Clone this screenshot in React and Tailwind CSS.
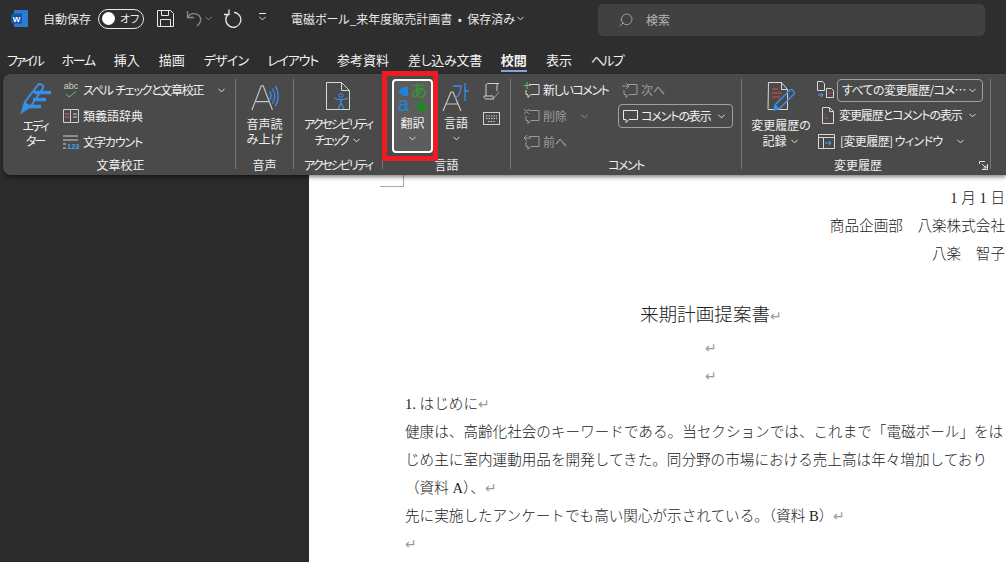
import React from 'react';
import { ChevronDown, Search } from 'lucide-react';

const tabs = [
  { t: 'ファイル', c: 'tracking-[-2.400px]' },
  { t: 'ホーム', c: 'tracking-[-1.300px]' },
  { t: '挿入', c: '' },
  { t: '描画', c: '' },
  { t: 'デザイン', c: 'tracking-[-0.800px]' },
  { t: 'レイアウト', c: 'tracking-[-1.200px]' },
  { t: '参考資料', c: '' },
  { t: '差し込み文書', c: 'tracking-[-0.300px]' },
  { t: '校閲', c: 'font-bold' },
  { t: '表示', c: '' },
  { t: 'ヘルプ', c: 'tracking-[-1.700px]' },
];

const Chev = ({ className = '' }) => <ChevronDown size={11} strokeWidth={2} className={`shrink-0 ${className}`} />;

const Ret = () => <span className="inline-block w-[12px] text-center text-[#9a9a9a] text-[14px] leading-[14px]">↵</span>;

// Comment bubble, with a small mark in the top left corner
const Bubble = ({ mark, color = '#dcdcdc' }) => (
  <svg width="17" height="17" viewBox="0 0 17 17" fill="none" stroke={color} strokeWidth="1" className="shrink-0">
    <path d="M6 2.500h10v10H8l-3 3v-3H3V8" />
    {mark === 'plus' && <path d="M4 0v7M.5 3.500h7" stroke="#5fc46a" />}
    {mark === 'x' && <path d="M1 1l5 5M6 1L1 6" />}
    {mark === 'prev' && <path d="M8 4H1M4 1L1 4l3 3" />}
    {mark === 'next' && <path d="M1 4h7M5 1l3 3-3 3" />}
  </svg>
);

const Group = ({ label, width, labelClass = '', children }) => (
  <div className={`flex flex-col shrink-0 border-r border-[#777777] my-[5px] h-[90px] ${width}`}>
    <div className="flex-1 flex min-h-0">{children}</div>
    <div className={`text-[12px] leading-[16px] -mb-[4px] text-center text-[#f0f0f0] whitespace-nowrap ${labelClass}`}>{label}</div>
  </div>
);

const SmallRow = ({ icon, children, dim, className = '' }) => (
  <div className={`h-[26px] flex items-center gap-[3px] whitespace-nowrap text-[12px] ${dim ? 'text-[#9b9b9b]' : 'text-[#f0f0f0]'} ${className}`}>
    {icon}
    {children}
  </div>
);

const Line = ({ className = '', children }) => <div className={`h-[28px] ${className}`}>{children}</div>;

export default function App() {
  return (
    <div className="w-[1006px] h-[562px] overflow-hidden bg-[#2e2e2e] font-['Noto_Sans_CJK_JP','Liberation_Sans',sans-serif] [font-feature-settings:'palt'] flex flex-col relative">
      {/* Title bar */}
      <div className="h-[37px] shrink-0 flex items-center text-[#e8e8e8] text-[12px] pl-[11px]">
        <svg width="17" height="17" viewBox="0 0 17 17" className="shrink-0">
          <rect x="3" y="0" width="14" height="17" rx="1" fill="#2b7cd3" />
          <rect x="0" y="3.500" width="11" height="10" rx="1" fill="#1651a8" />
          <text x="5.500" y="11.500" fontSize="8" fontWeight="700" fill="#fff" textAnchor="middle" fontFamily="Liberation Sans">W</text>
        </svg>
        <span className="ml-[15px] w-[55px] whitespace-nowrap">自動保存</span>
        <div className="w-[46px] h-[20px] rounded-full border border-[#e8e8e8] flex items-center pl-[3px] gap-[5px]">
          <span className="w-[13px] h-[13px] rounded-full bg-white" />
          <span className="text-[11px] whitespace-nowrap">オフ</span>
        </div>
        <svg width="17" height="17" viewBox="0 0 17 17" fill="none" stroke="#e8e8e8" className="ml-[13px] shrink-0">
          <path d="M.5.500h13l3 3v13H.5z M4.500.500v5h7v-5 M3.500 16.500v-7h10v7" />
        </svg>
        <svg width="17" height="17" viewBox="0 0 17 17" fill="none" stroke="#8a8a8a" strokeWidth="1.300" className="ml-[12px] shrink-0">
          <path d="M1.500 1v6.500H8 M1.500 7.500C4 3 9.500 2.500 13 5.500c3 3 2 7.500-2 10.500" />
        </svg>
        <Chev className="text-[#8a8a8a]" />
        <svg width="19" height="19" viewBox="0 0 19 19" fill="none" stroke="#e8e8e8" strokeWidth="1.300" className="ml-[9px] shrink-0">
          <path d="M6 .5v5H1 M11 3.300a7.500 7.500 0 1 1-6 2.200" />
        </svg>
        <div className="ml-[16px] flex flex-col items-center w-[9px]">
          <div className="w-[7px] h-px bg-[#e8e8e8] mb-[1px]" />
          <Chev className="-mt-[2px]" />
        </div>
        <span className="ml-[24px] w-[224px] whitespace-nowrap">電磁ボール_来年度販売計画書 &nbsp;•&nbsp; 保存済み</span>
        <Chev />
        <div className="ml-[72px] w-[387px] h-[32px] mt-[3px] bg-[#414141] rounded-[5px] flex items-center pl-[20px] gap-[12px] text-[#b5b5b5]">
          <Search size={16} strokeWidth={1.200} className="-scale-x-100" />
          <span className="text-[12px]">検索</span>
        </div>
      </div>

      {/* Tabs */}
      <div className="h-[37px] shrink-0 flex items-center pl-[7px] gap-[19px] text-[13px] text-[#f2f2f2] pt-[9px]">
        {tabs.map(({ t, c }) => (
          <span key={t} className={`relative whitespace-nowrap ${c}`}>
            {t}
            {t === '校閲' && <span className="absolute left-0 right-0 -bottom-[2px] h-[2px] bg-[#7ea6e0]" />}
          </span>
        ))}
      </div>

      {/* Ribbon */}
      <div className="h-[101px] shrink-0 ml-[3px] bg-[#4a4a4a] rounded-l-[8px] flex shadow-[0_2px_4px_rgba(0,0,0,0.5)] z-10 relative">
        <Group label="文章校正" width="w-[233px]" labelClass="pl-[3px]">
          <div className="w-[59px] shrink-0 pl-[5px] flex flex-col items-center pt-[3px] text-[12px] leading-[15px] text-[#f0f0f0] text-center tracking-[-2px]">
            <svg width="32" height="32" viewBox="0 0 32 32" fill="none" className="shrink-0">
              <path d="M3 30l3-10L19 3c2-2 6 0 5 3L12 24z" stroke="#3a8ee6" strokeWidth="2" />
              <path d="M3 30l9-6-6-4z" fill="#3a8ee6" />
              <path d="M15 10.500h17M14 17.500h13M9 24.500h13" stroke="#3a8ee6" strokeWidth="3.500" />
            </svg>
            <span className="mt-[4px]">エディ<br />ター</span>
          </div>
          <div className="flex flex-col -mt-[2px]">
            <SmallRow icon={
              <span className="w-[18px] text-[9px] leading-[9px] text-[#cfcfcf] text-center font-['Liberation_Sans']">abc
                <svg width="12" height="7" viewBox="0 0 12 7" className="mx-auto" fill="none" stroke="#5fc46a"><path d="M1 3l3 3 7-5.500" /></svg>
              </span>}>
              <span className="tracking-[-1.300px]">スペル&nbsp;&nbsp;チェックと文章校正</span><Chev className="ml-[10px]" />
            </SmallRow>
            <SmallRow icon={
              <svg width="16" height="16" viewBox="0 0 16 16" fill="none" stroke="#cfcfcf" className="mx-[1px]"><path d="M.5 1.500h7v13h-7zM8 1.500h7.500v13H8" /><path d="M2 6h4M2 9h4" stroke="#e05a5a" /><path d="M10 6h4M10 9h4" /></svg>
            }>類義語辞典</SmallRow>
            <SmallRow icon={
              <svg width="18" height="16" viewBox="0 0 18 16" className="shrink-0"><path d="M1 2h15M1 6h15M1 10h3M1 14h3" stroke="#cfcfcf" fill="none" /><text x="5" y="15" fontSize="7.500" fontWeight="700" fill="#4aa3e8" fontFamily="Liberation Sans">123</text></svg>
            }><span className="tracking-[-1.100px]">文字カウント</span></SmallRow>
          </div>
        </Group>

        <Group label="音声" width="w-[58px]">
          <div className="w-full flex flex-col items-center text-[12px] leading-[15px] text-[#f0f0f0] text-center pt-[4px]">
            <svg width="28" height="28" viewBox="0 0 30 30" fill="none" className="shrink-0">
              <path d="M1 29L11 3h2l10 26M5 20h14" stroke="#c8c8c8" strokeWidth="1.200" />
              <path d="M20 9c2 3 2 6 0 9M23 6c3 5 3 11 0 16M26 3c4 6 4 16 0 22" stroke="#3a8ee6" strokeWidth="1.400" />
            </svg>
            <span className="mt-[5px]">音声読<br />み上げ</span>
          </div>
        </Group>

        <Group label={<span className="tracking-[-2px]">アクセシビリティ</span>} width="w-[89px]">
          <div className="w-full flex flex-col items-center text-[12px] leading-[16px] text-[#f0f0f0] text-center pt-[3px]">
            <svg width="26" height="28" viewBox="0 0 26 28" fill="none" stroke="#d8d8d8" className="shrink-0">
              <path d="M1.500.500h15l8 8v19h-23z" />
              <path d="M16.500.500v8h8" />
              <circle cx="16" cy="13.500" r="2" stroke="#3a8ee6" />
              <path d="M9 16c4 2 10 2 14 0M16 18v3M13 27l3-6 3 6" stroke="#3a8ee6" strokeWidth="1.300" />
            </svg>
            <span className="mt-[6px] whitespace-nowrap tracking-[-2px]">アクセシビリティ</span>
            <span className="flex items-center gap-[3px]"><span className="tracking-[-2px]">チェック</span><Chev /></span>
          </div>
        </Group>

        <Group label="言語" width="w-[128px]">
          <div className="ml-[9px] w-[41px] h-[74px] shrink-0 border-2 border-white rounded-[4px] bg-[#5c5c5c] flex flex-col items-center text-[12px] text-[#f0f0f0] pt-[2px]">
            <svg width="32" height="29" viewBox="0 0 32 29" className="shrink-0 overflow-visible">
              <path d="M1 8.500L6 4h5v9H6z" fill="#1d84d8" />
              <text x="6.500" y="28" fontSize="21" fontWeight="500" fill="#1d84d8" textAnchor="middle" fontFamily="Liberation Sans">a</text>
              <text x="22" y="14" fontSize="17" fill="#2aa02a" textAnchor="middle">あ</text>
              <path d="M17 19h8l4 3v6H19l4-4.500z" fill="#1b8a24" />
            </svg>
            <span className="mt-[3px] leading-[16px]">翻訳</span>
            <Chev className="mt-[2px]" />
          </div>
          <div className="ml-[5px] w-[36px] shrink-0 flex flex-col items-center text-[12px] text-[#f0f0f0] pt-[3px]">
            <svg width="28" height="30" viewBox="0 0 28 30" fill="none" className="shrink-0">
              <path d="M1 29L9 10h2l8 19M4 22h12" stroke="#c8c8c8" strokeWidth="1.200" />
              <path d="M11 4h8c0 6-2 10-6 12M23 1v18M23 9h4" stroke="#3a8ee6" strokeWidth="1.300" />
            </svg>
            <span className="mt-[3px] leading-[16px]">言語</span>
            <Chev className="mt-[2px]" />
          </div>
          <div className="ml-[9px] flex flex-col gap-[12px] pt-[4px]">
            <svg width="17" height="17" viewBox="0 0 17 17" fill="none" stroke="#cfcfcf" className="shrink-0">
              <path d="M3 13V2c0-1 1-1.500 2-1.500h11c-1 0-2 .500-2 2V8M1 13h9c0 2 .500 3 1 3H3c-1 0-2-1-2-3z" />
              <path d="M8 12l3 3 5-6" stroke="#5fc46a" />
            </svg>
            <svg width="17" height="13" viewBox="0 0 17 13" fill="none" stroke="#cfcfcf" className="shrink-0">
              <rect x=".5" y=".5" width="16" height="12" />
              <path d="M3 4h11M3 6.500h11M5 9.500h7" strokeDasharray="1.500 1" />
            </svg>
          </div>
        </Group>

        <Group label={<span className="tracking-[-1.500px]">コメント</span>} width="w-[231px]">
          <div className="ml-[12px] w-[95px] shrink-0 flex flex-col -mt-[2px]">
            <SmallRow className="gap-[2px]" icon={<Bubble mark="plus" />}><span className="tracking-[-1.400px]">新しいコメント</span></SmallRow>
            <SmallRow dim className="gap-[2px]" icon={<Bubble mark="x" color="#9b9b9b" />}>削除<Chev className="ml-[9px]" /></SmallRow>
            <SmallRow dim className="gap-[2px]" icon={<Bubble mark="prev" color="#9b9b9b" />}>前へ</SmallRow>
          </div>
          <div className="flex flex-col -mt-[2px]">
            <SmallRow dim className="ml-[3px]" icon={<Bubble mark="next" color="#9b9b9b" />}>次へ</SmallRow>
            <div className="mt-px w-[115px] h-[24px] border border-[#a0a0a0] rounded-[4px] flex items-center pl-[4px] pr-[5px] gap-[3px] text-[12px] text-[#f0f0f0] whitespace-nowrap">
              <svg width="15" height="15" viewBox="0 0 15 15" fill="none" stroke="#e8e8e8" className="shrink-0"><path d="M.5 1.500h14v9H6l-3 3v-3H.5z" /></svg>
              <span className="flex-1 tracking-[-1.100px]">コメントの表示</span>
              <Chev />
            </div>
          </div>
        </Group>

        <Group label="変更履歴" width="w-[249px]" labelClass="pr-[16px]">
          <div className="w-[75px] shrink-0 pl-[3px] flex flex-col items-center text-[12px] leading-[16px] text-[#f0f0f0] text-center pt-[3px]">
            <svg width="30" height="30" viewBox="0 0 30 30" fill="none" className="shrink-0 ml-[2px]">
              <path d="M1.500.500h13l6 7v20h-19.500z M14.500.500v7h6" stroke="#d8d8d8" />
              <path d="M5 7h6M5 11h10M5 15h8" stroke="#ef4444" />
              <path d="M7 28l1.500-5.500L23 8c1.500-1.500 5.500 2 4 4L12.500 26.500z" stroke="#3a8ee6" strokeWidth="1.500" />
              <path d="M7 28l1.500-5.500 4 4z" fill="#3a8ee6" />
            </svg>
            <span className="mt-[5px] whitespace-nowrap">変更履歴の</span>
            <span className="flex items-center gap-[2px]">記録<Chev /></span>
          </div>
          <div className="flex flex-col">
            <div className="flex items-center h-[22px] gap-[3px]">
              <svg width="17" height="18" viewBox="0 0 17 18" fill="none" stroke="#d8d8d8" className="shrink-0">
                <path d="M.5.500h5l2 2v7h-7zM9.500 7.500h5l2 2v7h-7z" />
                <path d="M1 14h5M4 12l2 2-2 2" stroke="#4aa3e8" />
                <path d="M11.500 12h3" stroke="#ef4444" />
              </svg>
              <div className="w-[146px] h-[23px] border border-[#a0a0a0] rounded-[4px] flex items-center pl-[4px] pr-[4px] text-[12px] text-[#f0f0f0] whitespace-nowrap">
                <span className="flex-1 tracking-[-0.600px]">すべての変更履歴/コメ…</span>
                <Chev />
              </div>
            </div>
            <SmallRow className="ml-[3px] mt-px" icon={
              <svg width="16" height="17" viewBox="0 0 16 17" fill="none" stroke="#d8d8d8" className="shrink-0"><path d="M2.500.500h7l4 4v12h-11z M9.500.500v4h4" /><path d="M5 8h1M5 11h3" stroke="#ef4444" /></svg>
            }><span className="tracking-[-1.100px]">変更履歴とコメントの表示</span><Chev className="ml-[2px]" /></SmallRow>
            <SmallRow className="ml-[1px]" icon={
              <svg width="17" height="15" viewBox="0 0 17 15" fill="none" stroke="#d8d8d8" className="mr-[2px] shrink-0"><path d="M.5.500h16v14H.5zM.5 3.500h16M5.500 3.500v11" /><path d="M7 9h6M11 7l2 2-2 2" stroke="#4aa3e8" /></svg>
            }><span className="tracking-[-0.600px]">[変更履歴] ウィンドウ</span><Chev className="ml-[9px]" /></SmallRow>
          </div>
        </Group>

        {/* launcher of the last group */}
        <svg width="9" height="9" viewBox="0 0 9 9" fill="none" stroke="#e0e0e0" className="absolute left-[976px] top-[87px]">
          <path d="M.5 3V.5H6M8.500 3v5.500H3M3 3l4 4M7 4.500V7H4.500" />
        </svg>

        {/* red highlight around the translate button */}
        <div className="absolute left-[379px] -top-[3px] w-[56px] h-[90px] border-[5px] border-[#ed1c24]" />
      </div>

      {/* Document area */}
      <div className="flex-1 flex min-h-0">
        <div className="w-[309px] shrink-0 bg-[#2b2b2b]" />
        <div className="flex-1 bg-white relative overflow-hidden pl-[96px] pt-[9px] font-['Liberation_Serif','Noto_Sans_CJK_JP',serif] font-light text-[14.600px] leading-[28px] text-[#222222] [font-feature-settings:normal]">
          <div className="absolute left-[71px] top-0 w-[24px] h-[12px] border-r border-b border-[#a8a8a8]" />
          <div className="w-[612px] whitespace-nowrap">
            <Line className="text-right pr-[12px]">1 月 1 日</Line>
            <Line className="text-right pr-[12px]">商品企画部　八楽株式会社</Line>
            <Line className="text-right pr-[12px]">八楽　智子</Line>
            <Line className="text-center text-[18.600px] mt-[33px]">来期計画提案書<Ret /></Line>
            <Line className="text-center mt-[5px]"><Ret /></Line>
            <Line className="text-center"><Ret /></Line>
            <Line>1. はじめに<Ret /></Line>
            <Line>健康は、高齢化社会のキーワードである。当セクションでは、これまで「電磁ボール」をは</Line>
            <Line>じめ主に室内運動用品を開発してきた。同分野の市場における売上高は年々増加しており</Line>
            <Line>（資料 A）、<Ret /></Line>
            <Line>先に実施したアンケートでも高い関心が示されている。（資料 B）<Ret /></Line>
            <Line><Ret /></Line>
          </div>
        </div>
      </div>
    </div>
  );
}
